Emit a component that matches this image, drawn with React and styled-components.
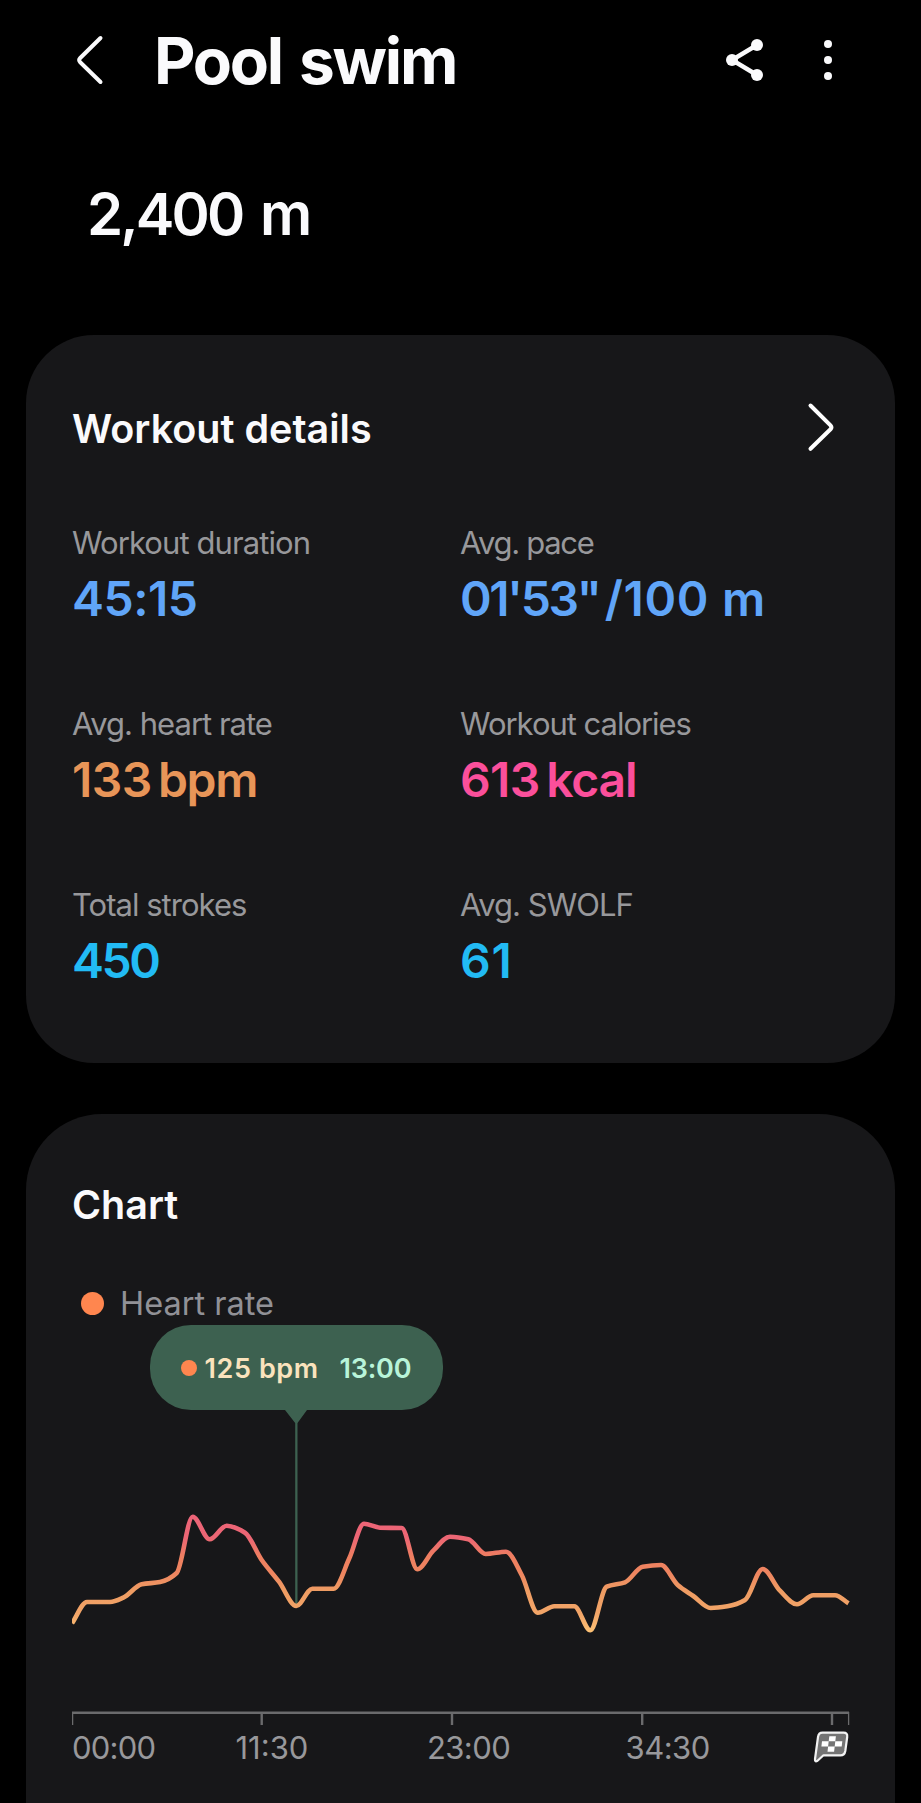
import React from "react";
import styled, { createGlobalStyle } from "styled-components";

const GlobalStyle = createGlobalStyle`
  * { box-sizing: border-box; }
  body {
    margin: 0;
    background: #000;
    font-family: Inter, Roboto, "Liberation Sans", sans-serif;
  }
`;

const Screen = styled.main`
  width: 921px;
  height: 1803px;
  overflow: hidden;
  background: #000;
  color: #fafafc;
  white-space: nowrap;
`;

const TopBar = styled.header`
  display: flex;
  align-items: center;
  height: 119px;
  padding: 0 82px 0 72px;
`;

const IconButton = styled.button`
  display: flex;
  align-items: center;
  justify-content: center;
  width: ${(p) => p.$width}px;
  height: 60px;
  padding: 0;
  border: 0;
  background: none;
  color: inherit;
`;

const Title = styled.h1`
  flex: 1;
  margin: 3px 0 0 48px;
  font-size: 64px;
  line-height: 80px;
  font-weight: 700;
  letter-spacing: -2.2px;
  word-spacing: 4px;
`;

const Actions = styled.div`
  display: flex;
  gap: 54px;
`;

const Distance = styled.div`
  height: 188px;
  padding-left: 87px;
  font-size: 58px;
  line-height: 191px;
  font-weight: 600;
  letter-spacing: -2.9px;
  word-spacing: 6px;
`;

const Card = styled.section`
  width: 869px;
  height: ${(p) => p.$height}px;
  margin: ${(p) => p.$gap}px 0 0 26px;
  padding: ${(p) => p.$top}px 45px 0 46px;
  border-radius: ${(p) => p.$radius};
  background: #171719;
`;

const CardHead = styled.div`
  display: flex;
  align-items: center;
  justify-content: space-between;
  height: 60px;
  padding-right: 13px;
`;

const CardTitle = styled.h2`
  margin: 2px 0 0;
  font-size: 39.5px;
  line-height: 60px;
  font-weight: 600;
`;

const StatGrid = styled.div`
  display: grid;
  grid-template-columns: 388px 1fr;
  grid-auto-rows: 181px;
  margin-top: 63px;
`;

const StatLabel = styled.div`
  font-size: 31px;
  line-height: 44px;
  color: #98989b;
  letter-spacing: ${(p) => p.$track}px;
`;

const StatValue = styled.div`
  display: flex;
  gap: ${(p) => p.$gap || 0}px;
  margin-top: 5px;
  font-size: 48px;
  line-height: 58px;
  font-weight: 600;
  color: ${(p) => p.$color};
`;

const ValuePart = styled.span`
  letter-spacing: ${(p) => p.$track}px;
`;

const Legend = styled.div`
  display: flex;
  align-items: center;
  gap: 16px;
  height: 44px;
  margin-top: 47px;
  padding-left: 9px;
`;

const LegendText = styled.span`
  margin-top: 2px;
  font-size: 32.5px;
  line-height: 44px;
  color: #919196;
`;

const Dot = styled.span`
  flex: none;
  width: ${(p) => p.$size}px;
  height: ${(p) => p.$size}px;
  border-radius: 50%;
  background: #ff864f;
`;

const Plot = styled.div`
  position: relative;
  height: 400px;
`;

const PlotSvg = styled.svg`
  display: block;
`;

const Tooltip = styled.div`
  position: absolute;
  left: 78px;
  top: 0;
  display: flex;
  align-items: center;
  width: 293px;
  height: 85px;
  padding-left: 30.5px;
  border-radius: 41px;
  background: #3d6150;
  font-size: 27px;
  line-height: 36px;
  font-weight: 600;
`;

const TipReading = styled.span`
  width: 135px;
  margin: 2px 0 0 8px;
  color: #fae3bd;
  letter-spacing: 0.6px;
`;

const TipTime = styled.span`
  margin-top: 2px;
  color: #b9f4d9;
  letter-spacing: -0.2px;
`;

const AxisLabels = styled.div`
  display: flex;
  align-items: center;
  height: 44px;
`;

const AxisLabel = styled.span`
  width: ${(p) => p.$width}px;
  margin-top: 2px;
  font-size: 31px;
  line-height: 44px;
  color: #98989b;
  letter-spacing: ${(p) => p.$track}px;
`;

const stats = [
  { label: "Workout duration", track: -0.92, value: [["45:15", -0.5]], color: "#60a5f8" },
  { label: "Avg. pace", track: -1.3, value: [["01'53\"", -2.3], ["/100 m", 0.7]], color: "#60a5f8", gap: 5 },
  { label: "Avg. heart rate", track: -1, value: [["133", -0.5], ["bpm", -1.3]], color: "#e89558", gap: 6 },
  { label: "Workout calories", track: -1.03, value: [["613", -0.6], ["kcal", -1.2]], color: "#fb4f9b", gap: 6.5 },
  { label: "Total strokes", track: -0.98, value: [["450", -2.4]], color: "#22bbf4" },
  { label: "Avg. SWOLF", track: -1, value: [["61", 0.8]], color: "#22bbf4" },
];

const ticks = [
  { label: "00:00", width: 163.5, track: -0.8 },
  { label: "11:30", width: 191.5, track: 0 },
  { label: "23:00", width: 198.5, track: -0.6 },
  { label: "34:30", width: 187.5, track: -0.5 },
];

const heartRate = [
  [0, 298.3], [15, 277], [38, 277], [51.3, 272.7], [69.7, 259.3], [88, 257],
  [104.7, 248], [120.7, 191.7], [137.7, 214.3], [154.7, 200.7],
  [173, 207.7], [189.7, 235], [207, 256.7], [224.3, 281], [240.3, 263.7],
  [261.7, 263.7], [277.3, 233.3], [292, 198.7], [308, 202.7], [329.7, 203],
  [345.3, 244.3], [361.3, 225.7], [378, 211.7], [396.3, 214.3], [413.7, 229],
  [434, 226.7], [449.7, 250], [465.7, 287.7], [482.3, 281.3], [502.3, 281.3],
  [518.3, 305.3], [534.7, 261.7], [553, 257.3], [570.7, 241.7], [589, 240],
  [605.7, 260], [621.3, 271], [638.7, 283], [655.3, 281.3], [673, 275],
  [690.7, 244], [708, 265.7], [725, 279.3], [741.3, 270.3], [763, 270.3],
  [776.5, 278.3],
];

// Monotone cubic interpolation keeps the peaks and plateaus free of overshoot.
function smoothPath(pts) {
  const d = pts.slice(1).map((p, i) => (p[1] - pts[i][1]) / (p[0] - pts[i][0]));
  const m = pts.map((p, i) => {
    if (i === 0) return d[0];
    if (i === pts.length - 1) return d[i - 1];
    if (d[i - 1] * d[i] <= 0) return 0;
    return (2 * d[i - 1] * d[i]) / (d[i - 1] + d[i]);
  });
  return pts.slice(1).reduce((path, p, i) => {
    const a = pts[i];
    const h = (p[0] - a[0]) / 3;
    return `${path} C${a[0] + h},${a[1] + h * m[i]} ${p[0] - h},${p[1] - h * m[i + 1]} ${p[0]},${p[1]}`;
  }, `M${pts[0][0]},${pts[0][1]}`);
}

function BackIcon() {
  return (
    <svg width="30" height="54" viewBox="0 0 30 54" fill="none" stroke="currentColor" strokeWidth="4" strokeLinecap="round" strokeLinejoin="round">
      <path d="M26.5 5 L6.2 25 Q4 27.1 6.2 29.2 L26.5 49" />
    </svg>
  );
}

function ForwardIcon() {
  return (
    <svg width="30" height="54" viewBox="0 0 30 54" fill="none" stroke="#fff" strokeWidth="4" strokeLinecap="round" strokeLinejoin="round">
      <path d="M3.5 4.5 L23.5 24.3 Q25.3 26.3 23.5 28.3 L3.5 47.8" />
    </svg>
  );
}

function ShareIcon() {
  return (
    <svg width="38" height="44" viewBox="0 0 38 44" fill="currentColor">
      <path d="M32 7 L7 22 L32 37" fill="none" stroke="currentColor" strokeWidth="4.4" />
      <circle cx="32" cy="7" r="6" />
      <circle cx="7" cy="22" r="6" />
      <circle cx="32" cy="37" r="6" />
    </svg>
  );
}

function MoreIcon() {
  return (
    <svg width="10" height="44" viewBox="0 0 10 44" fill="currentColor">
      <circle cx="5" cy="6" r="4" />
      <circle cx="5" cy="22" r="4" />
      <circle cx="5" cy="38" r="4" />
    </svg>
  );
}

function FinishIcon() {
  return (
    <svg width="36" height="32" viewBox="0 0 36 32">
      <path d="M9.5 1.7 H30.5 Q34.8 1.7 34.2 6 L32.3 20 Q31.6 24.3 27.4 24.3 H10.5 L4.5 29.8 Q1.6 31.4 2 28 L5 6 Q5.6 1.7 9.5 1.7Z" fill="#747474" stroke="#f2f2f2" strokeWidth="2.2" strokeLinejoin="round" />
      <path d="M16.3 5.2h6.6l-.6 5h-6.6zM9 10.2h6.7l-.6 5.4H8.4zM22.3 10.2h7l-.6 5.4h-7zM15.1 15.6h6.6l-.6 5.2h-6.6z" fill="#fff" />
    </svg>
  );
}

function HeartRatePlot() {
  return (
    <PlotSvg width="778" height="400" viewBox="0 0 778 400" fill="none">
      <defs>
        <linearGradient id="zones" gradientUnits="userSpaceOnUse" x1="0" y1="190" x2="0" y2="306">
          <stop offset="0" stopColor="#ed6478" />
          <stop offset="0.2" stopColor="#ec6674" />
          <stop offset="0.36" stopColor="#ee7f60" />
          <stop offset="0.5" stopColor="#ee8560" />
          <stop offset="0.65" stopColor="#ee9c63" />
          <stop offset="0.85" stopColor="#f2a568" />
          <stop offset="1" stopColor="#fcc074" />
        </linearGradient>
      </defs>
      <path d="M213 85 H235 L225.5 98 V279 H223.2 V98Z" fill="#3d6150" />
      <path d={smoothPath(heartRate)} stroke="url(#zones)" strokeWidth="4.6" />
      <path d="M0 387.7 H777" stroke="#6b6b6d" strokeWidth="2.4" />
      <path d="M0.6 387 V400 M776.6 387 V400" stroke="#6b6b6d" strokeWidth="1.3" />
      <path d="M189.7 388 V400 M380 388 V400 M570.2 388 V400 M760 388 V400" stroke="#6b6b6d" strokeWidth="2.4" />
    </PlotSvg>
  );
}

export default function App() {
  return (
    <Screen>
      <GlobalStyle />
      <TopBar>
        <IconButton $width={34} aria-label="Back"><BackIcon /></IconButton>
        <Title>Pool swim</Title>
        <Actions>
          <IconButton $width={38} aria-label="Share"><ShareIcon /></IconButton>
          <IconButton $width={22} aria-label="More"><MoreIcon /></IconButton>
        </Actions>
      </TopBar>
      <Distance>2,400 m</Distance>

      <Card $height={728} $gap={28} $top={63} $radius="68px">
        <CardHead>
          <CardTitle>Workout details</CardTitle>
          <ForwardIcon />
        </CardHead>
        <StatGrid>
          {stats.map((s) => (
            <div key={s.label}>
              <StatLabel $track={s.track}>{s.label}</StatLabel>
              <StatValue $color={s.color} $gap={s.gap}>
                {s.value.map(([part, track]) => <ValuePart key={part} $track={track}>{part}</ValuePart>)}
              </StatValue>
            </div>
          ))}
        </StatGrid>
      </Card>

      <Card $height={689} $gap={51} $top={60} $radius="76px 76px 0 0">
        <CardHead>
          <CardTitle>Chart</CardTitle>
        </CardHead>
        <Legend>
          <Dot $size={23} />
          <LegendText>Heart rate</LegendText>
        </Legend>
        <Plot>
          <HeartRatePlot />
          <Tooltip>
            <Dot $size={16} />
            <TipReading>125 bpm</TipReading>
            <TipTime>13:00</TipTime>
          </Tooltip>
        </Plot>
        <AxisLabels>
          {ticks.map((t) => <AxisLabel key={t.label} $width={t.width} $track={t.track}>{t.label}</AxisLabel>)}
          <FinishIcon />
        </AxisLabels>
      </Card>
    </Screen>
  );
}
